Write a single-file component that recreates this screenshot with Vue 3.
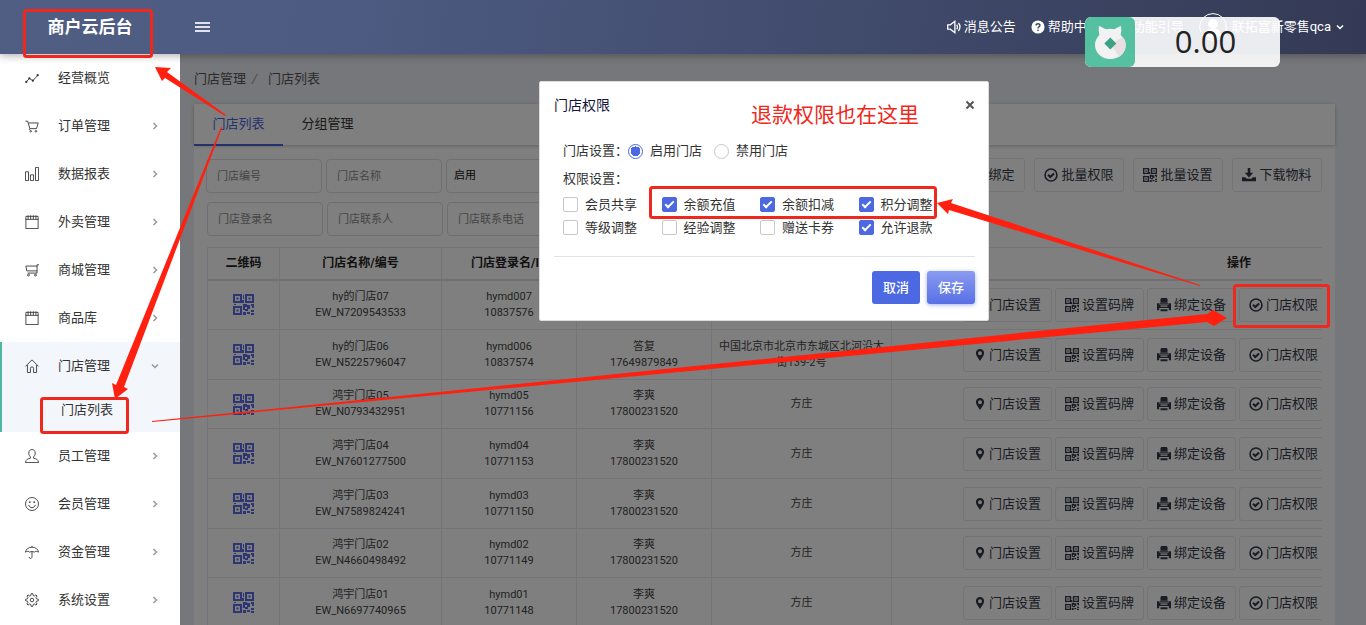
<script setup>
import { ref } from 'vue'

const menu = [
  { name: '经营概览', icon: 'trend', leaf: true },
  { name: '订单管理', icon: 'cart' },
  { name: '数据报表', icon: 'bars' },
  { name: '外卖管理', icon: 'note' },
  { name: '商城管理', icon: 'trolley' },
  { name: '商品库', icon: 'note' },
  { name: '门店管理', icon: 'home', open: true, child: '门店列表' },
  { name: '员工管理', icon: 'user' },
  { name: '会员管理', icon: 'smile' },
  { name: '资金管理', icon: 'umbrella' },
  { name: '系统设置', icon: 'gear' }
]

const rows = [
  { name: 'hy的门店07', no: 'EW_N7209543533', login: 'hymd007', id: '10837576', contact: '', phone: '', addr: '' },
  { name: 'hy的门店06', no: 'EW_N5225796047', login: 'hymd006', id: '10837574', contact: '答复', phone: '17649879849', addr: '中国北京市北京市东城区北河沿大街139-2号' },
  { name: '鸿宇门店05', no: 'EW_N0793432951', login: 'hymd05', id: '10771156', contact: '李爽', phone: '17800231520', addr: '方庄' },
  { name: '鸿宇门店04', no: 'EW_N7601277500', login: 'hymd04', id: '10771153', contact: '李爽', phone: '17800231520', addr: '方庄' },
  { name: '鸿宇门店03', no: 'EW_N7589824241', login: 'hymd03', id: '10771150', contact: '李爽', phone: '17800231520', addr: '方庄' },
  { name: '鸿宇门店02', no: 'EW_N4660498492', login: 'hymd02', id: '10771149', contact: '李爽', phone: '17800231520', addr: '方庄' },
  { name: '鸿宇门店01', no: 'EW_N6697740965', login: 'hymd01', id: '10771148', contact: '李爽', phone: '17800231520', addr: '方庄' }
]

const storeState = ref('on')
const perms = ref([
  { name: '会员共享', on: false },
  { name: '余额充值', on: true },
  { name: '余额扣减', on: true },
  { name: '积分调整', on: true },
  { name: '等级调整', on: false },
  { name: '经验调整', on: false },
  { name: '赠送卡券', on: false },
  { name: '允许退款', on: true }
])
</script>

<template>
  <div class="app">
    <svg class="defs" aria-hidden="true">
      <symbol id="i-trend" viewBox="0 0 16 16"><path d="M1.5 12.5 5 8.500l4 2.500L14.500 5" /><g fill="currentColor" stroke="none"><circle cx="1.500" cy="12.500" r="1.300" /><circle cx="5" cy="8.300" r="1.300" /><circle cx="9" cy="11" r="1.300" /><circle cx="14.500" cy="4.800" r="1.300" /></g></symbol>
      <symbol id="i-cart" viewBox="0 0 16 16"><path d="M.5 2.500h2.600l2.400 8.500h7.600l2-6.500H4M5.500 11l-.8 1.500" /><circle cx="6.500" cy="14" r=".9" /><circle cx="12.500" cy="14" r=".9" /></symbol>
      <symbol id="i-bars" viewBox="0 0 16 16"><path d="M.5 5.500h3.500v10H.500zM6.200 9h3.600v6.500H6.200zM12 .5h3.500v15H12z" /></symbol>
      <symbol id="i-note" viewBox="0 0 16 16"><path d="M1 1.500h14v14H1zM1 5h14M3.500.5v4M6.500.5v4M9.500.5v4M12.500.5v4" /></symbol>
      <symbol id="i-trolley" viewBox="0 0 16 16"><path d="M16 2h-2.200v9.500H3M13.800 3.500H1L2 9h11.800" /><circle cx="4" cy="13.800" r="1.100" /><circle cx="12" cy="13.800" r="1.100" /></symbol>
      <symbol id="i-home" viewBox="0 0 16 16"><path d="M.5 8.500 8 1l7.500 7.500M2.800 7v8.500h3.400v-4.700a1.800 1.800 0 0 1 3.600 0v4.700h3.400V7" /></symbol>
      <symbol id="i-user" viewBox="0 0 16 16"><path d="M8 .6c2.300 0 3.700 1.700 3.700 4 0 2-.9 3.500-1.900 4.400v1.500c2.600.5 5.500 1.500 5.700 5H.500c.2-3.500 3.100-4.500 5.700-5V9c-1-.9-1.900-2.400-1.900-4.400 0-2.300 1.400-4 3.700-4z" /></symbol>
      <symbol id="i-smile" viewBox="0 0 16 16"><circle cx="8" cy="8" r="7.400" /><path d="M4.200 9c.5 2 2 3.200 3.800 3.200S11.300 11 11.800 9" /><g fill="currentColor" stroke="none"><circle cx="5.500" cy="5.800" r="1" /><circle cx="10.500" cy="5.800" r="1" /></g></symbol>
      <symbol id="i-umbrella" viewBox="0 0 16 16"><path d="M8 1v1.500M.6 8.200C1 4.800 4 2.500 8 2.500s7 2.300 7.400 5.700C13.500 7 12 7 10.500 8.200 9 7.200 7 7.200 5.500 8.200 4 7 2.500 7 .6 8.200zM8 7.500V13.500c0 2.500-3.300 2.500-3.300.2" /></symbol>
      <symbol id="i-gear" viewBox="0 0 16 16"><path d="M7 .8h2l.4 2.100 1.300.5 1.800-1.200 1.300 1.300-1.200 1.800.5 1.300 2.100.4v2l-2.100.4-.5 1.300 1.200 1.800-1.300 1.300-1.800-1.200-1.300.5L9 15.200H7l-.4-2.100-1.300-.5-1.800 1.200-1.300-1.300 1.200-1.800-.5-1.300L.8 9V7l2.100-.4.5-1.300-1.200-1.800 1.300-1.300 1.800 1.200 1.300-.5z" /><circle cx="8" cy="8" r="2" /></symbol>
      <symbol id="i-qr" viewBox="0 0 21 21"><g fill="currentColor" stroke="none"><path fill-rule="evenodd" d="M0 0h9v9H0zM2 2v5h5V2zM3.500 3.500h2v2h-2zM12 0h9v9h-9zM14 2v5h5V2zM15.500 3.500h2v2h-2zM0 12h9v9H0zM2 14v5h5v-5zM3.500 15.500h2v2h-2z" /><path d="M10 1h1v4h-1zM9 6h2v3H9zM1 10h2v1H1zM10 10h4v3h-2v3h-2zM14 11h3v4h-2v2h-3v-2h2zM18 10h3v4h-2v-2h-1zM10 18h3v3h-3zM14 18h3v2h-3zM18 16h3v2h-3zM18 19h3v2h-3z" /></g></symbol>
      <symbol id="i-pin" viewBox="0 0 16 16"><path fill="currentColor" stroke="none" fill-rule="evenodd" d="M8 0c3.300 0 5.500 2.400 5.500 5.500C13.500 9 9.500 13 8 16 6.500 13 2.500 9 2.500 5.500 2.500 2.400 4.700 0 8 0zM8 3a2.600 2.600 0 1 0 0 5.200A2.600 2.600 0 0 0 8 3z" /></symbol>
      <symbol id="i-print" viewBox="0 0 16 16"><path fill="currentColor" stroke="none" fill-rule="evenodd" d="M5 0h6l1 1v4H4V1zM0 6h2.500v1.500h11V6H16v8h-2.500v-2.500h-11V14H0zM4 8.600v1.300h8V8.600zM4 12.800h8V15H4zM3 5.500h10v1H3z" /></symbol>
      <symbol id="i-check" viewBox="0 0 16 16"><circle cx="8" cy="8" r="6.800" stroke-width="1.800" /><path stroke-width="2.400" d="m4.600 7.800 2.600 2.500 4.300-4" /></symbol>
      <symbol id="i-down" viewBox="0 0 16 16"><path fill="currentColor" stroke="none" d="M6.500 0h3v5.500h3.300L8 10.800 3.200 5.500h3.300zM0 10.500h3.500l2 1.800h5l2-1.800H16V15H0z" /></symbol>
      <symbol id="i-chev" viewBox="0 0 16 16"><path d="m5 2 6 6-6 6" /></symbol>
    </svg>

    <header class="top">
      <h1 class="brand">商户云后台</h1>
      <button class="burger" aria-label="菜单"><span></span><span></span><span></span></button>
      <nav class="top-nav">
        <a href="#">
          <svg class="ico14 bold" viewBox="0 0 16 16"><path d="M.8 5.500h3L9 1.500v13L3.800 10.500h-3zM11 5.500c1.300 1.300 1.300 3.700 0 5M13 3.500c2.400 2.500 2.400 6.500 0 9" /></svg>
          <span>消息公告</span>
        </a>
        <a href="#">
          <svg class="ico14" viewBox="0 0 16 16"><circle cx="8" cy="8" r="7.500" fill="#fff" stroke="none" /><path d="M5.800 6.300c0-2.800 4.400-2.700 4.400-.2C10.200 7.800 8 7.700 8 9.600M8 11v1.600" stroke="#3a4360" stroke-width="1.700" /></svg>
          <span>帮助中心</span>
        </a>
        <a href="#">
          <svg class="ico14 bold" viewBox="0 0 16 16"><path d="M5.500 12C5.500 9.500 3 8.500 3 5.500a5 5 0 0 1 10 0c0 3-2.500 4-2.500 6.500zM6 14.500h4" /></svg>
          <span>功能引导</span>
        </a>
        <a href="#" class="account">
          <svg class="avatar" viewBox="0 0 28 28"><circle cx="14" cy="14" r="13.400" /><circle cx="14" cy="11" r="4.500" fill="#fff" /><path fill="#fff" d="M6 22c1-5 4-6 8-6s7 1 8 6a12 12 0 0 1-16 0z" /></svg>
          <span>联拓富新零售qca</span>
          <svg class="ico8 down" viewBox="0 0 16 16"><use href="#i-chev" /></svg>
        </a>
      </nav>
    </header>

    <div class="body">
      <aside class="side">
        <div v-for="m in menu" :key="m.name" :class="['group', { open: m.open }]">
          <a href="#" class="item">
            <svg class="ico14"><use :href="'#i-' + m.icon" /></svg>
            <span class="item-name">{{ m.name }}</span>
            <svg v-if="!m.leaf" :class="['ico8', { down: m.open }]" viewBox="0 0 16 16"><use href="#i-chev" /></svg>
          </a>
          <a v-if="m.child" href="#" class="sub">{{ m.child }}</a>
        </div>
      </aside>

      <main class="main">
        <nav class="crumb"><a href="#">门店管理</a><i>/</i><span>门店列表</span></nav>
        <section class="card">
          <div class="tabs">
            <button class="tab on">门店列表</button>
            <button class="tab">分组管理</button>
          </div>
          <div class="content">
            <div class="toolbar">
              <div class="filters">
                <input placeholder="门店编号" aria-label="门店编号" />
                <input placeholder="门店名称" aria-label="门店名称" />
                <select aria-label="状态"><option>启用</option></select>
              </div>
              <div class="actions">
                <button class="btn"><svg class="ico14"><use href="#i-print" /></svg>批量绑定</button>
                <button class="btn"><svg class="ico14"><use href="#i-check" /></svg>批量权限</button>
                <button class="btn"><svg class="ico14"><use href="#i-qr" /></svg>批量设置</button>
                <button class="btn"><svg class="ico14"><use href="#i-down" /></svg>下载物料</button>
              </div>
            </div>
            <div class="filters second">
              <input placeholder="门店登录名" aria-label="门店登录名" />
              <input placeholder="门店联系人" aria-label="门店联系人" />
              <input placeholder="门店联系电话" aria-label="门店联系电话" />
            </div>
            <div class="table-box">
              <table>
                <colgroup><col class="c1" /><col class="c2" /><col class="c3" /><col class="c3" /><col class="c5" /><col class="c6" /></colgroup>
                <thead>
                  <tr><th>二维码</th><th>门店名称/编号</th><th>门店登录名/ID</th><th>联系人</th><th>门店地址</th><th>操作</th></tr>
                </thead>
                <tbody>
                  <tr v-for="r in rows" :key="r.no">
                    <td><svg class="qr"><use href="#i-qr" /></svg></td>
                    <td>{{ r.name }}<br />{{ r.no }}</td>
                    <td>{{ r.login }}<br />{{ r.id }}</td>
                    <td>{{ r.contact }}<br />{{ r.phone }}</td>
                    <td>{{ r.addr }}</td>
                    <td>
                      <div class="ops">
                        <button class="btn"><svg class="ico12"><use href="#i-pin" /></svg>门店设置</button>
                        <button class="btn"><svg class="ico14"><use href="#i-qr" /></svg>设置码牌</button>
                        <button class="btn"><svg class="ico14"><use href="#i-print" /></svg>绑定设备</button>
                        <button class="btn"><svg class="ico14"><use href="#i-check" /></svg>门店权限</button>
                      </div>
                    </td>
                  </tr>
                </tbody>
              </table>
            </div>
          </div>
        </section>
        <div class="mask"></div>
      </main>
    </div>

    <form class="modal" role="dialog" aria-label="门店权限" @submit.prevent>
      <div class="modal-head">
        <h2>门店权限</h2>
        <button type="button" class="close" aria-label="关闭"><svg viewBox="0 0 10 10"><path d="m1.500 1.500 7 7M8.500 1.500l-7 7" /></svg></button>
      </div>
      <div class="modal-body">
        <div class="line">
          <span>门店设置：</span>
          <label><input v-model="storeState" type="radio" name="state" value="on" />启用门店</label>
          <label><input v-model="storeState" type="radio" name="state" value="off" />禁用门店</label>
        </div>
        <div class="line">权限设置：</div>
        <div class="perms">
          <label v-for="p in perms" :key="p.name"><input v-model="p.on" type="checkbox" />{{ p.name }}</label>
        </div>
      </div>
      <div class="modal-foot">
        <button type="button" class="cancel">取消</button>
        <button type="submit" class="save">保存</button>
      </div>
    </form>

    <div class="float">
      <div class="float-logo">
        <svg viewBox="0 0 50 50"><path d="M14 9c3 1 5 2.500 7 3.200 2.600-.7 5.600-.7 8.200 0C31 11.500 33 10 36 9c.5 3 .3 6-.3 9 3.200 3.500 5 6 5 10 0 8-7 14-15.400 14S10 36 10 28c0-4 1.500-7 4.400-10-.7-3-.9-6-.4-9z" fill="#f2f2f2" /><path d="m25.300 27 9 13c4-3 6.400-7 6.400-12 0-3-1-6-3-8z" fill="#e8dfe0" /><path d="m25.300 20.500 6 6-6 6-6-6z" fill="#3aa384" /></svg>
      </div>
      <output>0.00</output>
    </div>

    <p class="remark">退款权限也在这里</p>
    <svg class="marks" viewBox="0 0 1366 625" aria-hidden="true">
      <g fill="none" stroke="#f0271c" stroke-width="3">
        <rect x="24.500" y="10.500" width="127" height="46" rx="2" />
        <rect x="41.500" y="398.500" width="86" height="34" rx="2" />
        <rect x="650.500" y="187.500" width="285" height="30" rx="2" />
        <rect x="1234.500" y="285.500" width="94" height="41" rx="2" />
      </g>
      <g fill="#ff2010">
        <path d="M155 67l16 1-4 4 59 43-1 1-60-38-3 3z" />
        <path d="M221 127l1 1-98 259 4 2-13 10-3-16 4 2z" />
        <path d="M152 421l1055-107 6-4 14 8-13 8-7-4L152 422z" />
        <path d="M937 203l16-4-2 4 249 82v1l-251-76-1 4z" />
      </g>
    </svg>
  </div>
</template>

<style>
body { margin: 0; overflow: hidden; }
</style>

<style scoped>
.app { position: relative; display: flex; flex-direction: column; height: 100vh; overflow: hidden; font-family: Roboto, "Noto Sans CJK SC", sans-serif; font-size: 13px; line-height: 20px; color: #333; background: #fff; }
.app *, .app *::before, .app *::after { box-sizing: border-box; }
.defs { position: absolute; width: 0; height: 0; }
a { color: inherit; text-decoration: none; }
button, input, select { font: inherit; color: inherit; margin: 0; }
button { cursor: pointer; }
svg { fill: none; stroke: currentColor; flex: none; }
.ico14 { width: 14px; height: 14px; }
.ico12 { width: 12px; height: 12px; }
.ico8 { width: 8px; height: 8px; stroke-width: 3; }
.bold { stroke-width: 1.5; }
.down { transform: rotate(90deg); }

.top { position: relative; z-index: 2; display: flex; align-items: center; flex: none; height: 54px; background: linear-gradient(100deg, #505e84 0%, #4d5b82 25%, #343a55 100%); box-shadow: 0 2px 8px rgba(0, 0, 0, .3); color: #fff; }
.brand { width: 180px; margin: 0; font-size: 17px; font-weight: 700; text-align: center; }
.burger { display: flex; flex-direction: column; gap: 2px; margin-left: 15px; padding: 0; border: 0; background: none; }
.burger span { width: 15px; height: 2px; background: #dfe2ea; }
.top-nav { display: flex; align-items: center; margin-left: auto; padding-right: 22px; gap: 15px; }
.top-nav a { display: flex; align-items: center; gap: 3px; white-space: nowrap; }
.top-nav .account { gap: 5px; }
.avatar { width: 28px; height: 28px; }

.body { display: flex; flex: 1; min-height: 0; }
.side { width: 180px; flex: none; background: #fff; color: #333; }
.group.open { background: #f3f6fa; box-shadow: inset 2px 0 #4fb79f; }
.item { display: flex; align-items: center; height: 48px; padding: 0 21px 0 25px; }
.item .ico8 { color: #999; }
.item-name { flex: 1; margin-left: 19px; }
.sub { display: block; height: 42px; padding: 10px 0 0 61px; line-height: 20px; }

.main { position: relative; flex: 1; min-width: 0; padding: 0 31px 0 14px; background: #edeff4; overflow: hidden; }
.mask { position: absolute; inset: 0; background: rgba(0, 0, 0, .5); }
.crumb { display: flex; height: 49px; align-items: center; margin-bottom: 1px; color: #555; }
.crumb i { width: 22px; padding-left: 6px; color: #999; }
.card { background: #fff; color: #333; }
.tabs { display: flex; height: 41px; box-shadow: 0 1px 4px rgba(0, 0, 0, .25); }
.tab { height: 42px; min-width: 89px; padding: 0 18px; border: 0; border-bottom: 2px solid transparent; background: none; }
.tab.on { color: #4c62d8; border-bottom-color: #4c62d8; }
.content { padding: 13px 13px 0 12px; }
.toolbar { display: flex; justify-content: space-between; }
.filters { display: flex; gap: 4px; }
.filters.second { margin: 8px 0 0 1px; }
.filters input, .filters select { width: 116px; height: 34px; margin-top: 1px; padding: 0 10px; border: 1px solid #dedee2; border-radius: 4px; background: #fff; font-size: 11px; appearance: none; outline: 0; }
.filters select { padding: 0 7px; color: #111; }
.filters input::placeholder { color: #8b8b8b; opacity: 1; }
.actions { display: flex; gap: 9px; }
.btn { display: flex; align-items: center; justify-content: center; gap: 3px; width: 90px; height: 34px; padding: 0; border: 1px solid #e8e8ec; border-radius: 3px; background: #fff; white-space: nowrap; color: #343846; }
.table-box { margin: 11px 0 0 1px; overflow: hidden; }
table { width: 1379px; table-layout: fixed; border-collapse: collapse; font-size: 11px; line-height: 16px; text-align: center; }
.c1 { width: 72px; }
.c2 { width: 162px; }
.c3 { width: 135px; }
.c5 { width: 180px; }
.c6 { width: 695px; }
th { height: 32px; padding: 0; border: 1px solid #e8e8ec; border-bottom: 2px solid #e0e0e6; font-size: 12px; font-weight: 700; color: #222; }
td { height: 50px; padding: 0 6px; border: 1px solid #e8e8ec; color: #444; }
tr:nth-child(3n) td { height: 49px; }
th:last-child { border-left-color: transparent; }
.qr { display: block; width: 21px; height: 21px; margin: 0 auto; color: #5a6ae6; }
.ops { display: flex; gap: 3px; padding-left: 65px; font-size: 13px; }
.ops .btn { width: 89px; }

.modal { position: absolute; z-index: 3; left: 539px; top: 81px; width: 450px; padding: 13px 13px 16px 14px; background: #fff; border: 1px solid #ddd; border-radius: 2px; }
.modal-head { display: flex; align-items: center; justify-content: space-between; height: 20px; }
.modal-head h2 { margin: 0; font-size: 14px; font-weight: 400; color: #14143c; }
.close { width: 10px; height: 20px; padding: 0; border: 0; background: none; color: #555; }
.close svg { display: block; width: 10px; height: 10px; stroke-width: 2; }
.modal-body { padding: 22px 0 17px 9px; border-bottom: 1px solid #dfe3ea; }
.line { display: flex; align-items: center; height: 28px; gap: 12px; }
.line span { margin-right: -12px; }
.line label { display: flex; align-items: center; gap: 7px; }
.perms { display: grid; grid-template-columns: repeat(4, 1fr); margin-right: 18px; }
.perms label { display: flex; align-items: center; gap: 7px; height: 23px; white-space: nowrap; }
.modal input { position: relative; appearance: none; flex: none; width: 15px; height: 15px; border: 1px solid #c8c8cc; background: #fff; }
.modal input[type="radio"] { border-radius: 50%; }
.modal input[type="radio"]:checked { border-color: #4c69e0; background: radial-gradient(#4c69e0 0 5px, #fff 5px); }
.modal input[type="checkbox"] { border-radius: 2px; }
.modal input[type="checkbox"]:checked { border-color: #4c69e0; background: #4c69e0; }
.modal input[type="checkbox"]:checked::after { content: ""; position: absolute; left: 4px; top: 1px; width: 5px; height: 9px; border: solid #fff; border-width: 0 2px 2px 0; transform: rotate(45deg); }
.modal-foot { display: flex; justify-content: flex-end; gap: 7px; padding-top: 14px; }
.modal-foot button { height: 33px; padding: 0 11px; border: 0; border-radius: 3px; background: #4c69e3; color: #fff; font-weight: 500; }
.modal-foot .save { background: linear-gradient(#8a9bf0, #5870e6); box-shadow: 0 1px 4px rgba(76, 105, 227, .5); }

.float { position: absolute; z-index: 4; top: 17px; right: 86px; display: flex; width: 195px; height: 50px; border-radius: 6px; background: rgba(255, 255, 255, .9); overflow: hidden; }
.float-logo { width: 50px; height: 50px; border-radius: 6px; background: rgba(76, 190, 155, .95); }
.float-logo svg { display: block; width: 50px; height: 50px; stroke: none; }
.float output { flex: 1; padding-right: 4px; font: 31px/48px "Open Sans", sans-serif; color: #222; text-align: center; }

.remark { position: absolute; z-index: 5; left: 751px; top: 100px; margin: 0; font-size: 21px; line-height: 30px; color: #f0271c; white-space: nowrap; }
.marks { position: absolute; z-index: 5; left: 0; top: 0; width: 1366px; height: 625px; pointer-events: none; stroke: none; }
</style>
